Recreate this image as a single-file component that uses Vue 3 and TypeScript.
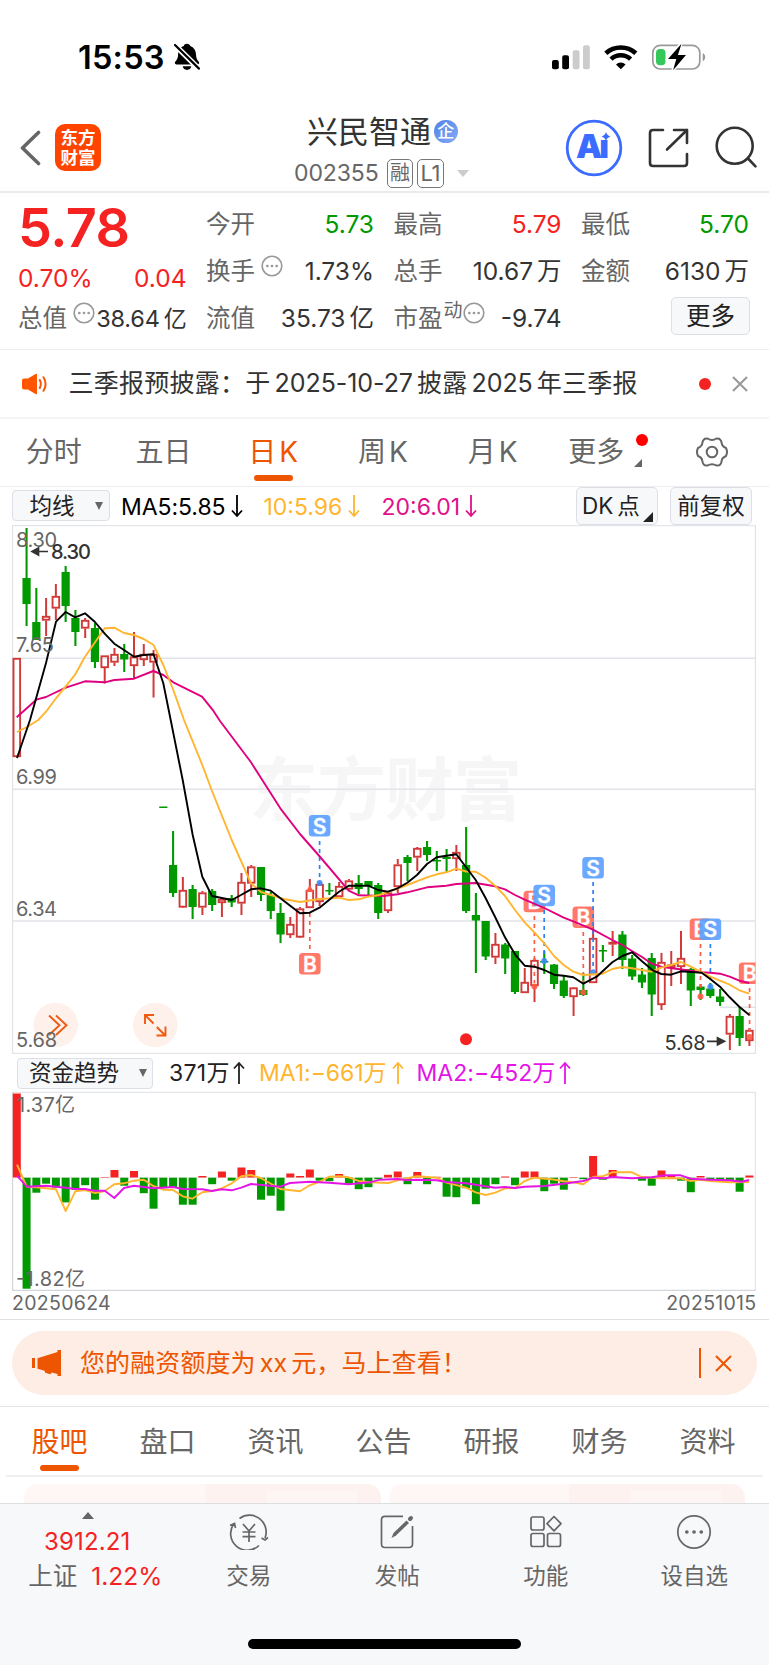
<script setup lang="ts">
type Candle = [up: number, high: number, low: number, top: number, bottom: number]

// up flag, wick top, wick bottom, body top, body bottom (canvas units)
const candles: Candle[] = [
  [1, 658, 757, 658, 757], [0, 528, 626, 578, 604], [0, 588, 640, 622, 640], [1, 598, 636, 616, 620.5],
  [1, 584, 620, 596, 608.5], [0, 566, 622, 572, 606], [0, 610, 646, 618, 632], [1, 618, 638, 620, 628.5],
  [0, 623, 668, 628, 662], [1, 655.5, 683.5, 655.5, 668], [1, 648, 666, 654, 662.5], [0, 644, 672, 654, 659.5],
  [1, 632, 679, 656.5, 666], [1, 644, 666, 654, 660], [1, 650, 697.5, 654, 662.5], [0, 807, 808, 806.5, 808],
  [0, 831, 897, 865, 893], [1, 877, 907, 890, 907.5], [0, 885, 919, 889, 907], [1, 891, 915, 892.5, 907.5],
  [0, 889, 911, 891, 905], [1, 899, 917, 899, 903], [0, 895, 907, 898, 902.5], [1, 873, 915, 882, 903.5],
  [1, 865, 897, 866.5, 883.5], [0, 867, 901, 867, 895], [0, 892, 919, 895, 911], [0, 903, 943, 913, 934.5],
  [1, 917, 938, 924, 935], [1, 907, 938, 908.5, 937.5], [1, 879, 908, 890, 908], [1, 882, 906, 884, 902],
  [0, 883, 895, 890, 891.5], [1, 882, 897, 886, 897], [1, 879, 891, 880.5, 889.5], [0, 875, 894, 883, 889],
  [0, 881, 895, 881, 886], [0, 883, 919, 885, 913], [1, 891, 913, 892.5, 911], [1, 859, 893, 864.5, 887],
  [0, 855, 881, 857, 863], [1, 847, 871, 848, 857.5], [0, 841, 861, 847, 855], [0, 851, 871, 860, 861.5],
  [0, 849, 872, 857, 859], [1, 845, 871, 852, 859], [0, 827, 913, 865, 911], [0, 893, 973, 915, 920.5],
  [0, 921, 960, 921, 956.5], [1, 933, 964, 944, 957.5], [0, 943, 974, 944.5, 958.5], [0, 951, 994, 951, 992],
  [1, 968, 993, 982, 993], [1, 958, 1002, 960, 986], [0, 951, 974, 961, 962.5], [0, 964, 989, 964.5, 984],
  [0, 976, 998, 980.5, 996], [1, 987, 1016, 987.5, 997], [0, 973, 996, 990, 995], [1, 923, 983, 938, 983],
  [0, 945, 962, 950, 951.5], [1, 931, 956, 942, 944.5], [0, 931, 969, 934.5, 960], [0, 955, 980, 958.5, 976.5],
  [0, 968, 988, 974.5, 982.5], [0, 953, 1016, 958, 994.5], [1, 953, 1010, 962, 1005], [1, 951, 986, 964.5, 968],
  [1, 931, 984, 958, 967], [0, 968, 1006, 969, 990.5], [0, 984, 1000, 986.5, 990], [0, 983, 998, 988.5, 996],
  [0, 989, 1006, 996.5, 1002], [1, 1014, 1050, 1016, 1034.5], [0, 1007, 1046, 1016, 1038], [1, 1028, 1046, 1030, 1041],
]
const cx = (i: number): number => 16.8 + i * 9.768

const flows: number[] = [
  84, -111, -15, -6, -10, -24.7, -12, -7.5, -22, 0.5, 7.5, -8, 6.5, -15.5, -31, -10.5, -10, -27, -27, 1.5,
  -6.5, 6, -3, 10, 7.5, -22, -18, -33, 4, 1.5, 8, -3, -3.5, 3.5, -6, -11.5, -9.5, -1.5, 2.7, 6,
  -6.5, 5.5, -6.5, 0.7, -19, -19.5, -10.5, -26.5, -11, -6.5, 1, -7.5, 6, 6, -13.5, -6, -12, 0.5, -1.5, 21.5,
  -2, 7.5, 0, 0, -3, -8, 7, 2.5, -3, -14.5, 1.5, -2.5, -2.5, -2.5, -14, 2,
]

const ma5 = '17,758 30,720 46,663 56,621.7 65.7,612 75.3,617.3 85,613.3 95,622 104.7,633.7 114.3,643.7 124,650 134,656.7 143.7,655 153.5,654.3 163.3,683.3 170.7,720 182.7,780 192.7,835 202.3,876.7 212,896 231.7,900 241,895 251,889.3 261,888.3 270.7,890.7 285,901.7 300,913.3 309.7,912.7 319.5,907.7 329,900 339,891.7 348.7,885.7 368.3,885.7 378,890 388,891.7 397.7,888.3 407.3,882.7 417,875 427,864 436.7,857.3 456.3,854.3 475.7,880 485.7,898.3 495,916.7 505,937.3 515,954.3 524.7,965.7 534.3,966.7 544.3,970 554,974.7 563.7,975.7 573.3,977.3 583.3,983.7 596.7,976.7 612.3,962.3 622.3,956 632,952.3 641.7,961 653.3,970.7 661.3,974 671,974.7 681,971.3 701.7,972.7 710.3,979 720,986.7 729.7,997.3 739.3,1006.7 749.3,1015'
const ma10 = '17,732 27,727 38.3,720 46,711.7 56,698.3 75.3,674.3 85,656.7 104.7,628.3 114.3,627.7 124,633 134,635 143.7,639 153.3,644.7 163.3,665 173.3,690 184,720 202.3,765 212,791 231.7,840 241.3,861.7 251,883.3 261,892 270.7,895 285.3,899.3 300,902 319.3,899 339,897.7 348.7,900 358.7,899.3 368,896.7 378,895.3 388,892 407.3,885 427,877.3 436.7,874.3 446.3,872.3 456.3,868.7 466,871.5 475.7,871.7 485.7,877.7 495,885.7 505,896 515,910 524.7,922.3 534.3,932.3 544.3,943.3 554,956 563.7,965 573.3,971.7 583.3,975 602.7,973.7 612.3,969 622.3,967 632,968.3 651.7,971.7 661.3,967.7 671,965 681,962 690.7,966.7 710.3,976.7 729.7,984.7 739.3,990.3 749.3,993.7'
const ma20 = '16.7,717.3 36.3,699.7 46,697 65.7,687.7 85,681.3 104.7,682.3 114.3,680 134,678.7 153.3,671 163.3,675 173.3,682.3 202,696.7 213.3,710.7 220,721 251,762.3 280.3,808.3 300,834 319.3,856 348.7,890.7 358.7,895.3 383.3,896 397.7,894.3 407.3,892.3 427,887.3 446.3,885.7 456.3,884 475.7,883 495,886.3 505,889.3 515,895 524.7,899.7 544.3,908 563.7,917.7 573.3,921.3 593,929.7 612.3,940 622.3,945 632,951 641.7,956.7 651.7,963.7 661.3,966.7 690.7,970.7 700.3,972.3 710.3,972.7 720,973.7 729.7,976.7 739.3,980.7 749.3,983'
const flowMa1 = '17,1164.7 26.7,1186.7 36.3,1187.3 56,1189.3 65.7,1211 75.3,1191.3 85,1190 95.3,1193 104.7,1191 114.3,1184.3 124,1183.3 134,1180.7 143.7,1179.7 153.3,1186 163.3,1189.7 173,1190 182.7,1196.3 192.3,1198.7 202.3,1192.3 212,1191 221.7,1188.3 231.7,1183.3 241.3,1176.3 251,1175 260.7,1178 280.3,1189 300,1191.3 309.7,1185.3 320,1181.7 329.3,1176.7 340,1176.3 348.7,1177.3 360,1181.3 370,1182.3 388.3,1183 397.7,1180.3 417,1176.3 436.7,1177.7 446.3,1182.7 466,1187.7 475.7,1192.3 485.7,1195 495.3,1192.7 505,1188.3 515,1188 524.7,1181 534.3,1177.7 551.7,1179.3 563.7,1181.3 573.3,1182.3 583.3,1184.3 593,1177 602.7,1176.3 612.3,1172.3 632,1172.3 641.7,1177 661.3,1178.3 680.7,1178.3 690.7,1181 700.3,1179.7 710,1181 729.7,1182.3 749,1182'
const flowMa2 = '17,1175.7 26.7,1186.7 46,1185.7 65.7,1187.7 75.3,1189 85,1189 94.7,1190.7 104.7,1190.7 114.3,1198 124,1188 134,1185.7 153.3,1188.3 173,1187 182.7,1189 202.3,1189.3 212,1191 221.7,1189.3 231.7,1190.3 241.3,1187.7 251,1184 280.3,1186.7 290,1183 309.7,1181.7 329.3,1182.7 348.7,1184.3 370,1182.3 380,1179.7 397.7,1179 407.3,1180.3 417,1179.7 436.7,1180.3 446.3,1182 466,1183.3 485,1186.3 495.3,1187.7 505,1187 515,1188 524.7,1186.7 544.3,1186 563.7,1183.7 583.3,1181 593,1177.7 605,1178.3 612.3,1177 632,1178.3 651.7,1177.3 665,1175.3 680.7,1175.3 690.7,1178.7 710,1179.7 729.7,1180.3 741.7,1181.7 749,1180'

interface Mark { kind: 'B' | 'S'; x: number; y: number; from: number; to: number; dot: number }
const marks: Mark[] = [
  { kind: 'B', x: 309.8, y: 963.7, from: 913, to: 949, dot: 889 },
  { kind: 'S', x: 319.6, y: 825.7, from: 841, to: 880, dot: 883 },
  { kind: 'B', x: 534.4, y: 901.5, from: 916, to: 983, dot: 986.5 },
  { kind: 'S', x: 544.2, y: 895.5, from: 910, to: 957, dot: 961 },
  { kind: 'B', x: 583.3, y: 917.3, from: 932, to: 988, dot: 992.3 },
  { kind: 'S', x: 593.1, y: 867.7, from: 882, to: 970, dot: 972.3 },
  { kind: 'B', x: 700.5, y: 929.2, from: 944, to: 992, dot: 996.5 },
  { kind: 'S', x: 710.4, y: 929.2, from: 944, to: 984, dot: 986.7 },
  { kind: 'B', x: 749.6, y: 973.2, from: 988, to: 1033, dot: 1037 },
]

interface Cell { label: string; value: string; unit?: string; tone: string; info?: boolean; sup?: string }
const quoteRows: Cell[][] = [
  [
    { label: '今开', value: '5.73', tone: 'down' },
    { label: '最高', value: '5.79', tone: 'up' },
    { label: '最低', value: '5.70', tone: 'down' },
  ],
  [
    { label: '换手', value: '1.73%', tone: 'flat', info: true },
    { label: '总手', value: '10.67', unit: '万', tone: 'flat' },
    { label: '金额', value: '6130', unit: '万', tone: 'flat' },
  ],
  [
    { label: '流值', value: '35.73', unit: '亿', tone: 'flat' },
    { label: '市盈', value: '-9.74', tone: 'flat', sup: '动', info: true },
  ],
]
const periods = ['分时', '五日', '日K', '周K', '月K']
const sections = ['股吧', '盘口', '资讯', '公告', '研报', '财务', '资料']
const split = (s: string): string[] => (s.endsWith('K') ? [s[0], 'K'] : [s])
</script>

<template>
  <div class="phone">
    <div class="status">
      <span class="clock">15:53</span>
      <svg class="bell" width="26" height="28" viewBox="0 0 26 28">
        <path d="M13 0.8c1.8 0 3 1 3.2 2.2 3.8 1.3 5.6 4.3 5.8 8.3.2 4 1 5.500 2.600 7.200 1 1.100.8 2.900-1 2.900H2.400c-1.700 0-2-1.800-1-2.900C3.200 16.600 4 15 4.100 11.300 4.300 7.300 6 4.300 9.800 3 10.100 1.700 11.300.8 13 .8zM8.700 23.300h8.600c-.4 2.300-2.100 3.600-4.300 3.600s-3.900-1.300-4.300-3.600z" />
        <path d="M.5 1.700 25.500 26.300" stroke="#fff" stroke-width="5.500" />
        <path d="M1 2 25 25.600" stroke="#000" stroke-width="2.200" stroke-linecap="round" />
      </svg>
      <svg class="radio" width="156" height="28" viewBox="0 0 156 28">
        <rect x="1" y="17" width="6.800" height="9.300" rx="2" />
        <rect x="11.200" y="12.300" width="6.800" height="14" rx="2" />
        <rect x="21.700" y="7.300" width="6.800" height="19" rx="2" fill="#ccc" />
        <rect x="32" y="2.200" width="6.800" height="24.100" rx="2" fill="#ccc" />
        <g fill="none" stroke="#000" stroke-width="4.600">
          <path d="M54.800 10.300a22.500 22.500 0 0 1 30 0" />
          <path d="M60 16.200a14.200 14.200 0 0 1 19.600 0" />
        </g>
        <path d="M69.800 26.200l-4.800-4.800a7 7 0 0 1 9.600 0z" />
        <rect x="101.800" y="2.300" width="47" height="23.700" rx="7.500" fill="none" stroke="#999" stroke-width="1.700" />
        <path d="M151.700 10v8.200c3.400-1.500 3.400-6.700 0-8.200z" fill="#999" />
        <rect x="105" y="6" width="9.500" height="16.200" rx="4" fill="#34c759" />
        <path d="M130.500-.4 116.500 16h8.300l-3.500 12.300 14.500-16.800h-8.100z" fill="#fff" stroke="#fff" stroke-width="2.600" />
        <path d="M130.500.8 117 16h8.300l-3.200 11.200L135 12h-8.100z" />
      </svg>
    </div>

    <header class="header">
      <svg class="back" width="22" height="36" viewBox="0 0 22 36"><path d="M19.500 2.500 3.500 18l16 15.500" fill="none" stroke="#666" stroke-width="3.600" stroke-linecap="round" stroke-linejoin="round" /></svg>
      <div class="logo"><span>东方</span><span>财富</span></div>
      <div class="title">
        <div class="name">兴民智通<i class="corp">企</i></div>
        <div class="code"><span class="num">002355</span><b>融</b><b>L1</b><i class="drop"></i></div>
      </div>
      <svg class="actions" width="200" height="60" viewBox="0 0 200 60">
        <circle cx="29" cy="30" r="26.800" fill="none" stroke="#3b6cff" stroke-width="2.800" />
        <text x="11" y="39.500" class="ai" textLength="33">A<tspan>ı</tspan></text>
        <path d="M41 13.800q.8 3.600 4.500 4.700-3.700 1-4.500 4.700-.9-3.700-4.500-4.700 3.600-1.100 4.500-4.700z" fill="#3b6cff" />
        <g fill="none" stroke="#333" stroke-width="2.600" stroke-linecap="round" stroke-linejoin="round">
          <path d="M98 12H88q-3 0-3 3v30q0 3 3 3h31q3 0 3-3V36M109 12h13v13M122 12l-20 19.500" />
          <circle cx="169.700" cy="27.800" r="18" />
          <path d="m183 40.500 7.500 7.800" />
        </g>
      </svg>
    </header>

    <section class="quote">
      <div class="own">
        <div class="price">5.78</div>
        <div class="change"><span>0.70%</span><span>0.04</span></div>
        <div class="cell cap"><span class="lbl">总值</span><svg class="dots" viewBox="0 0 22 22"><circle cx="11" cy="11" r="9.800" /><path d="M6.300 11h.1M10.950 11h.1M15.600 11h.1" /></svg><span class="val">38.64<em>亿</em></span></div>
      </div>
      <div class="grid">
        <template v-for="(row, r) in quoteRows" :key="r">
          <div v-for="c in row" :key="c.label" class="cell">
            <span class="lbl">{{ c.label }}</span>
            <span v-if="c.sup" class="sup">{{ c.sup }}</span>
            <svg v-if="c.info" class="dots" :class="{ tight: c.sup }" viewBox="0 0 22 22"><circle cx="11" cy="11" r="9.800" /><path d="M6.300 11h.1M10.950 11h.1M15.600 11h.1" /></svg>
            <span class="val" :class="c.tone">{{ c.value }}<em v-if="c.unit">{{ c.unit }}</em></span>
          </div>
        </template>
        <div class="cell"><button class="more">更多</button></div>
      </div>
    </section>

    <section class="notice">
      <svg width="27" height="24" viewBox="0 0 27 24">
        <path d="M3 6.500h4L14.500 2q1.500-.7 1.500 1v18q0 1.700-1.500 1L7 17.500H3q-2 0-2-2v-7q0-2 2-2z" fill="#ff5500" />
        <path d="M18.800 8q2 4 0 8M22.500 5.200q4.200 6.800 0 13.600" fill="none" stroke="#ff5500" stroke-width="2" stroke-linecap="round" />
      </svg>
      <p>三季报预披露：于<span>2025-10-27</span>披露<span>2025</span>年三季报</p>
      <i class="reddot"></i>
      <svg class="close" width="16" height="16" viewBox="0 0 16 16"><path d="m1 1 14 14M15 1 1 15" stroke="#999" stroke-width="2" /></svg>
    </section>

    <nav class="periods">
      <div v-for="p in periods" :key="p" class="tab" :class="{ on: p === '日K' }"><span v-for="s in split(p)" :key="s">{{ s }}</span></div>
      <div class="tab wide"><span>更多</span><i class="reddot"></i><i class="corner"></i></div>
      <div class="tab">
        <svg width="34" height="32" viewBox="-17 -16 34 32" fill="none" stroke="#666" stroke-width="2">
          <circle r="5.300" />
          <path d="M-4.500-13.500Q0-10.500 4.500-13.500Q9-14 9.700-8.800Q10-5.500 14-4Q16 0 14 4Q9.800 6 9.700 8.800Q9 14 4.500 13.500Q0 10.800-4.500 13.500Q-9 14-9.700 8.800Q-10 5.500-14 4Q-16 0-14-4Q-9.800-6-9.700-8.800Q-9-14-4.500-13.500Z" stroke-linejoin="round" />
        </svg>
      </div>
    </nav>

    <div class="toolbar top">
      <div class="select avg">均线<i></i></div>
      <div class="legend l1"><span>MA5:5.85</span><svg class="arrow" viewBox="0 0 12 24"><path d="M6 1v21M1 16.500 6 22l5-5.500" /></svg></div>
      <div class="legend l2"><span>10:5.96</span><svg class="arrow" viewBox="0 0 12 24"><path d="M6 1v21M1 16.500 6 22l5-5.500" /></svg></div>
      <div class="legend l3"><span>20:6.01</span><svg class="arrow" viewBox="0 0 12 24"><path d="M6 1v21M1 16.500 6 22l5-5.500" /></svg></div>
      <div class="pill dk">DK<span>点</span><i></i></div>
      <div class="pill">前复权</div>
    </div>

    <svg class="chart" width="769" height="529" viewBox="0 525 769 529">
      <defs><clipPath id="plot"><rect x="12" y="525" width="743.500" height="529" /></clipPath></defs>
      <text x="249" y="814.500" class="watermark" textLength="273">东方财富</text>
      <g stroke="#e1e4e9" stroke-width="1.500">
        <path d="M12 658.300H755.500M12 789.300H755.500M12 921H755.500M720 1007.300H755.500" />
        <rect x="12.600" y="525.700" width="742.800" height="527.600" fill="none" stroke-width="1" stroke="#dcdfe3" />
      </g>
      <g clip-path="url(#plot)">
        <g v-for="(c, i) in candles" :key="i">
          <template v-if="c[0]">
            <path :d="`M${cx(i)} ${c[1]}V${c[3]}M${cx(i)} ${c[4]}V${c[2]}`" stroke="#d23a3a" stroke-width="2" />
            <rect :x="cx(i) - 3.300" :y="c[3] + 0.800" width="6.600" :height="Math.max(c[4] - c[3] - 1.600, 0.800)" fill="none" stroke="#d23a3a" stroke-width="1.900" />
          </template>
          <template v-else>
            <path :d="`M${cx(i)} ${c[1]}V${c[2]}`" stroke="#009a00" stroke-width="2.100" />
            <rect :x="cx(i) - 4.100" :y="c[3]" width="8.200" :height="c[4] - c[3]" fill="#009a00" />
          </template>
        </g>
        <g v-for="(m, i) in marks" :key="i" :fill="m.kind === 'B' ? '#ff5a44' : '#3c8cf5'" :stroke="m.kind === 'B' ? '#ff5a44' : '#2d82f5'">
          <path :d="`M${m.x} ${m.from}V${m.to}`" stroke-width="1.700" stroke-dasharray="4 4" />
          <circle v-if="i" :cx="m.x" :cy="m.dot" r="3" stroke="none" opacity="0.900" />
          <path v-else :d="`M${m.x} ${m.dot - 4}l4 7h-8z`" stroke="none" />
          <rect :x="m.x - 10.800" :y="m.y - 10.800" width="21.600" height="21.600" rx="3.500" stroke="none" :fill="m.kind === 'B' ? '#ff7868' : '#5aa0ff'" :opacity="m.kind === 'B' ? 1 : 0.900" />
          <text :x="m.x" :y="m.y + 7.800" class="bs">{{ m.kind }}</text>
        </g>
        <g fill="none" stroke-width="1.900" stroke-linejoin="round">
          <polyline :points="ma20" stroke="#e0007f" />
          <polyline :points="ma10" stroke="#ffb52e" />
          <polyline :points="ma5" stroke="#000" />
        </g>
      </g>
      <g class="axis">
        <text x="16" y="547" textLength="41">8.30</text>
        <text x="16" y="652" textLength="38">7.65</text>
        <text x="16" y="783.500" textLength="41">6.99</text>
        <text x="16" y="915.500" textLength="41">6.34</text>
      </g>
      <path d="M34 551.500h14M32 551.500l6.500-3.500v7z" stroke="#333" stroke-width="1.700" fill="#333" />
      <text x="51" y="558.500" class="peak" textLength="40">8.30</text>
      <text x="664.500" y="1049.500" class="trough" textLength="41">5.68</text>
      <path d="M707 1041.300h15M724.500 1041.300l-7-3.500v7z" stroke="#333" stroke-width="1.700" fill="#333" />
      <circle cx="466" cy="1039.300" r="6" fill="#f52222" />
      <circle cx="55.700" cy="1025" r="22.300" fill="#fef1eb" />
      <circle cx="155.300" cy="1025" r="22.300" fill="#fef1eb" />
      <g fill="none" stroke="#ee5a10" stroke-width="1.900">
        <path d="m49 1015.500 10.500 9.700L49 1035M56 1015.500l10.500 9.700L56 1035" />
        <path d="M154 1015h-9v9M145 1015l8.500 8.500M156.500 1035.500h9v-9M165.300 1035.500l-8.500-8.500" />
      </g>
      <text x="16" y="1047" class="axis" textLength="41">5.68</text>
    </svg>

    <div class="toolbar low">
      <div class="select fund">资金趋势<i></i></div>
      <div class="legend f1"><span>371万</span><svg class="arrow" viewBox="0 0 12 24"><path d="M6 23V2M1 7.500 6 2l5 5.500" /></svg></div>
      <div class="legend f2"><span>MA1:−661万</span><svg class="arrow" viewBox="0 0 12 24"><path d="M6 23V2M1 7.500 6 2l5 5.500" /></svg></div>
      <div class="legend f3"><span>MA2:−452万</span><svg class="arrow" viewBox="0 0 12 24"><path d="M6 23V2M1 7.500 6 2l5 5.500" /></svg></div>
    </div>

    <svg class="chart" width="769" height="201" viewBox="0 1091 769 201">
      <path d="M12.600 1092.300H755.400V1290.300" fill="none" stroke="#e4e6e9" stroke-width="1.300" />
      <path d="M12.600 1092V1290.300H755.800" fill="none" stroke="#d3d7db" stroke-width="1.300" />
      <path d="M12 1177.700H755.500" stroke="#e8e8e8" />
      <template v-for="(v, i) in flows" :key="i">
        <rect v-if="v" :x="cx(i) - 4" :y="v > 0 ? 1177.500 - v : 1177.700" width="8" :height="Math.abs(v)" :fill="v > 0 ? '#f52222' : '#009a00'" />
      </template>
      <g fill="none" stroke-width="1.900" stroke-linejoin="round">
        <polyline :points="flowMa1" stroke="#ffb52e" />
        <polyline :points="flowMa2" stroke="#e414e6" />
      </g>
      <g class="axis">
        <text x="17" y="1112" textLength="58">1.37亿</text>
        <text x="16" y="1286" textLength="69">-1.82亿</text>
      </g>
    </svg>
    <div class="dates"><span>20250624</span><span>20251015</span></div>

    <div class="promo">
      <svg width="32" height="28" viewBox="0 0 32 28" fill="#ee5500"><path d="M1 9h3v10H1zM6.500 9.300 26.500 3V1h3.500v26h-3.500v-2l-5.500-1.500-1.800 1.800-5-1.500-.7-2-7-2z" /></svg>
      <p>您的融资额度为<span>xx</span>元，马上查看！</p>
      <i class="bar"></i>
      <svg class="close" width="17" height="17" viewBox="0 0 17 17"><path d="m1 1 15 15M16 1 1 16" stroke="#ee5500" stroke-width="2" /></svg>
    </div>

    <nav class="sections">
      <div v-for="s in sections" :key="s" class="tab" :class="{ on: s === '股吧' }"><span>{{ s }}</span></div>
    </nav>
    <div class="cards"><div><i></i><b></b></div><div><i></i><b></b></div></div>

    <footer class="bottom">
      <div class="index">
        <i></i>
        <strong>3912.21</strong>
        <p>上证<span>1.22%</span></p>
      </div>
      <div class="item">
        <svg viewBox="-20 -18 40 36"><path d="M-9.500-13.500A16.700 16.700 0 0 1 16 6M10 13.500A16.700 16.700 0 0 1-15-8.500M12.500 6 16 8l3-2.500M-19-6.500l4.500-2 1 4.500M-6-8l6 7 6-7M-6.500 0H6.500M-6.500 4.700H6.500M0-1V10" /></svg>
        <span>交易</span>
      </div>
      <div class="item">
        <svg viewBox="-20 -18 40 36"><path d="M6-15.700H-12q-3.500 0-3.500 3.500V12q0 3.500 3.500 3.500h24q3.500 0 3.500-3.500V-6" /><path d="M-5.500 6-3.500 1 9.500-11.500l2.500 2.500L-1 3.500z" fill="#666" stroke="none" /><path d="m13-13 1-1" stroke-width="4" stroke-linecap="round" /></svg>
        <span>发帖</span>
      </div>
      <div class="item">
        <svg viewBox="-20 -18 40 36"><rect x="-15" y="-15" width="13" height="13" rx="2" /><rect x="-15" y="1.500" width="13" height="13" rx="2" /><rect x="1.500" y="1.500" width="13" height="13" rx="2" /><path d="m8-15.500 7 7.200-7 7.200-7-7.200z" stroke-linejoin="round" /></svg>
        <span>功能</span>
      </div>
      <div class="item">
        <svg viewBox="-20 -18 40 36"><circle r="16.200" /><path d="M-7.200 0h.1M0 0h.1M7.200 0h.1" stroke-width="3.600" stroke-linecap="round" /></svg>
        <span>设自选</span>
      </div>
      <div class="home"></div>
    </footer>
  </div>
</template>

<style>
html, body { margin: 0; background: #fff; }
</style>

<style scoped>
* { box-sizing: border-box; }
i, em { font-style: normal; }
p { margin: 0; }
.phone { width: 769px; height: 1665px; overflow: hidden; background: #fff; color: #333; font-family: "Inter", "Noto Sans CJK SC", sans-serif; font-size: 24.5px; line-height: 1; display: flex; flex-direction: column; white-space: nowrap; }
.phone > * { flex: none; }

.status { height: 104px; display: flex; align-items: flex-start; padding: 43px 62.500px 0 78px; color: #000; }
.clock { font-size: 32.500px; font-weight: 600; line-height: 30px; width: 95.500px; letter-spacing: 0.200px; }
.radio { margin-left: auto; }

.header { height: 89px; display: flex; align-items: flex-start; border-bottom: 2px solid #ebebeb; padding: 0 4px 0 19px; }
.back { margin-top: 26px; }
.logo { margin: 20px 0 0 14px; width: 46px; height: 47px; border-radius: 10px; background: #ff4400; color: #fff; font-weight: 700; font-size: 17.500px; display: flex; flex-direction: column; align-items: center; justify-content: center; line-height: 19.500px; }
.title { flex: 1; margin-left: 193px; }
.name { font-size: 31px; line-height: 34px; margin-top: 10.500px; padding-left: 13px; display: flex; align-items: center; }
.corp { width: 23.500px; height: 23.500px; border-radius: 50%; background: linear-gradient(135deg, #4f82e6, #86a9f5); color: #fff; font-size: 17px; font-weight: 500; line-height: 23px; text-align: center; margin: 0 0 0 3px; }
.code { display: flex; align-items: center; margin-top: 10px; height: 30px; font-size: 23px; color: #666; }
.num { width: 93px; letter-spacing: -0.100px; }
.code b { font-weight: 400; border: 1.500px solid #777; border-radius: 5px; width: 26px; height: 29px; line-height: 27px; text-align: center; font-size: 20px; margin-right: 3.500px; }
.code b + b { width: 27.500px; font-size: 22px; letter-spacing: -0.500px; }
.drop { border: 6.500px solid transparent; border-top: 7px solid #ccc; border-bottom: 0; margin-left: 9px; }
.actions { margin-top: 14px; }
.ai { font-family: "Inter"; font-weight: 900; font-size: 33px; fill: #3b6cff; }

.quote { height: 157px; border-bottom: 1px solid #eee; display: flex; padding: 7.500px 20px 0 18px; gap: 19.500px; }
.own { width: 168.500px; }
.price { color: #f52222; font-size: 54px; font-weight: 600; height: 53px; line-height: 53px; letter-spacing: -0.500px; }
.change { color: #f52222; display: flex; justify-content: space-between; height: 41px; line-height: 48px; }
.grid { flex: 1; display: grid; grid-template-columns: repeat(3, 168px); grid-auto-rows: 47px; justify-content: space-between; }
.cell { height: 47px; display: flex; align-items: center; color: #333; }
.lbl { color: #666; font-size: 24.500px; }
.val { margin-left: auto; }
.val em { margin-left: 4px; }
.cap .val { font-size: 23.500px; letter-spacing: -0.200px; padding-top: 2px; }
.cap .val em { font-size: 23px; }
.up { color: #f52222; }
.down { color: #009a00; }
.dots { width: 22px; height: 22px; margin: -11px 0 0 5.500px; fill: none; stroke: #999; stroke-width: 1.600; stroke-linecap: round; }
.dots path { stroke-width: 2.600; }
.dots.tight { margin-left: 0.500px; }
.sup { font-size: 19px; color: #666; margin: -15px 0 0 1px; }
.more { margin-left: auto; width: 79px; height: 38px; margin-right: -1px; margin-top: -4px; border: 1.500px solid #dcdfe5; border-radius: 5px; background: #f7f8fa; font: inherit; color: #222; padding: 0; line-height: 1; }

.notice { height: 69px; border-bottom: 2px solid #f4f4f4; display: flex; align-items: center; padding: 0 21.500px 0 21px; font-size: 25px; }
.notice p { margin-left: 20.500px; letter-spacing: 0.250px; }
.notice p span { margin: 0 4px; letter-spacing: -0.050px; }
.reddot { width: 12px; height: 12px; border-radius: 50%; background: #f52222; }
.notice .reddot { margin-left: auto; }
.close { margin-left: 20.500px; }

.periods { height: 67.500px; border-bottom: 1px solid #eee; display: grid; grid-template-columns: repeat(7, 109.700px); font-size: 28px; color: #666; margin-left: -1px; }
.tab { position: relative; display: flex; align-items: center; justify-content: center; gap: 3px; }
.tab.on { color: #ee5500; }
.tab.on::after { content: ""; position: absolute; bottom: 4.500px; width: 39px; height: 6px; border-radius: 3px; background: #ee5500; }
.wide span { margin-right: 12px; }
.wide .reddot { position: absolute; left: 88.500px; top: 15px; background: #f00; }
.corner { position: absolute; left: 87px; top: 39.500px; border: 4px solid #666; border-left-color: transparent; border-top-color: transparent; }

.toolbar { display: flex; align-items: center; font-size: 23px; }
.top { height: 38.500px; padding-left: 12px; }
.low { height: 37px; padding-left: 16.500px; padding-top: 1px; }
.select { height: 31px; border: 1.500px solid #dcdfe5; border-radius: 4px; background: #f7f8fa; font-size: 22.500px; color: #222; display: flex; align-items: center; }
.select i { margin-left: auto; border: 4.500px solid transparent; border-top: 8px solid #666; border-bottom: 0; }
.avg { width: 98px; padding: 0 6px 0 16.500px; }
.fund { width: 136.500px; padding: 0 5px 0 11.500px; }
.legend { display: flex; align-items: center; padding-top: 1px; }
.legend span { padding-top: 1.500px; }
.low .legend { padding-top: 0; }
.arrow { width: 12px; height: 24px; margin-left: auto; fill: none; stroke: currentColor; stroke-width: 1.800; }
.l1 { width: 121.500px; margin-left: 11px; color: #000; letter-spacing: -0.050px; }
.l2 { width: 96px; margin-left: 21px; color: #ffb52e; }
.l3 { width: 95px; margin-left: 22px; color: #e0108a; }
.f1 { width: 76px; margin-left: 16px; color: #222; letter-spacing: 0.300px; }
.f2 { width: 145px; margin-left: 14px; color: #ffb52e; letter-spacing: -0.050px; }
.f3 { width: 154px; margin-left: 12.500px; color: #e414e6; letter-spacing: 0.050px; }
.pill { width: 82px; height: 38.500px; border: 1.500px solid #dcdfe5; border-radius: 5px; background: #f7f8fa; display: flex; align-items: center; justify-content: center; color: #222; font-size: 22.500px; }
.dk { margin: 0 12px 0 99.500px; justify-content: flex-start; padding-left: 5px; position: relative; }
.dk span { margin-left: 4px; }
.dk i { position: absolute; right: 4px; bottom: 2px; border: 5.500px solid #222; border-left-color: transparent; border-top-color: transparent; }

.chart { display: block; }
.axis { fill: #666; font-size: 20px; }
.peak { fill: #333; font-size: 20px; font-weight: 500; }
.trough { fill: #333; font-size: 20px; }
.watermark { font-size: 69px; font-weight: 700; fill: #f6f6f6; }
.bs { fill: #fff; stroke: #fff; stroke-width: 0.300; font-size: 21px; font-weight: 600; text-anchor: middle; }

.dates { height: 27.500px; border-bottom: 1.500px solid #e0e0e0; padding: 0 12.500px 3px 12px; display: flex; justify-content: space-between; align-items: center; font-size: 19.500px; letter-spacing: 0.300px; color: #666; }

.promo { margin: 11.500px 12px 11px 12px; height: 64px; border-radius: 32px; background: #fdede4; color: #ee5500; display: flex; align-items: center; font-size: 25px; padding: 0 25px 0 18.500px; }
.promo p { margin-left: 17.500px; letter-spacing: 0.100px; }
.promo p span { margin: 0 4px; }
.bar { width: 1.500px; height: 30px; background: #ee5500; margin-left: auto; }
.promo .close { margin-left: 14.500px; }

.sections { height: 68.500px; border-top: 1.500px solid #e4e4e4; display: grid; grid-template-columns: repeat(7, 108px); padding-left: 5.500px; font-size: 28px; color: #666; }
.sections .tab { padding-top: 2px; }
.sections .tab.on::after { bottom: 3.500px; }
.cards { height: 28.500px; margin: 0 6px; border-top: 2px solid #f0f0f0; padding: 7px 18px 0; display: flex; gap: 8px; overflow: hidden; }
.cards > div { flex: 1; height: 40px; border-radius: 14px; background: #fef7f5; position: relative; overflow: hidden; display: flex; justify-content: flex-end; }
.cards i { width: 176px; background: #fdf2f0; }
.cards b { position: absolute; right: 24px; top: 7px; width: 90px; height: 30px; background: #fef6f4; }

.bottom { flex: 1 !important; background: #f7f8fa; border-top: 1.500px solid #dcdfe0; display: grid; grid-template-columns: 174.500px repeat(4, 148.500px); position: relative; color: #666; }
.index { display: flex; flex-direction: column; align-items: center; color: #f52222; }
.index i { border: 6.500px solid transparent; border-bottom: 7px solid #666; border-top: 0; margin: 8px 0 0 2px; }
.index strong { font-weight: 400; font-size: 24px; margin-top: 11px; letter-spacing: 0.150px; }
.index p { margin-top: 9.500px; margin-left: 16px; color: #666; font-size: 24.500px; }
.index p span { color: #f52222; margin-left: 14px; font-size: 24.500px; }
.item { display: flex; flex-direction: column; align-items: center; font-size: 22.500px; }
.item svg { width: 40px; height: 36px; margin-top: 10px; fill: none; stroke: #666; stroke-width: 1.700; }
.item span { margin-top: 15px; }
.home { position: absolute; left: 247.500px; bottom: 16px; width: 273.500px; height: 10px; border-radius: 5px; background: #000; }
</style>
